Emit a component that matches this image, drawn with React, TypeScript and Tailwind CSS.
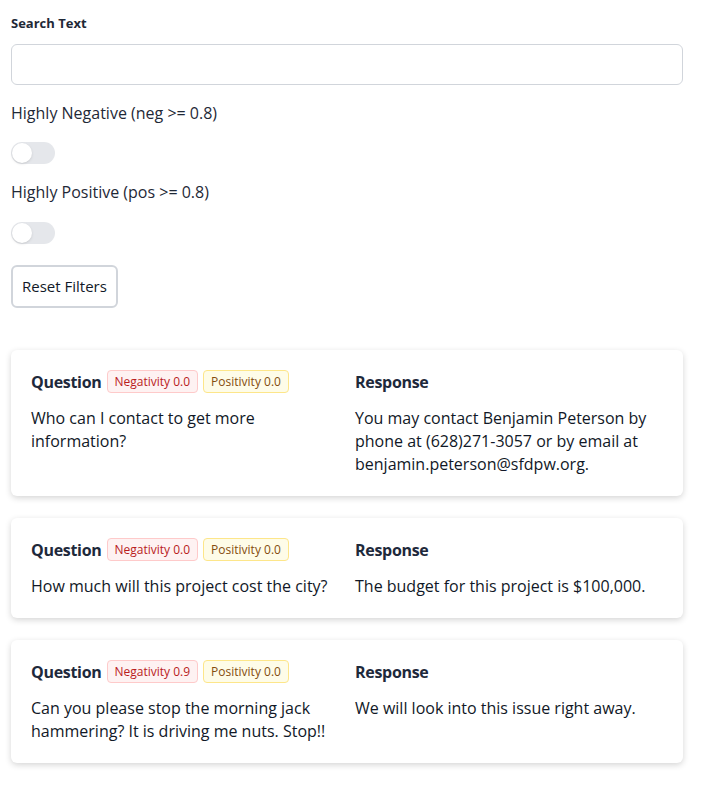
import React from "react"

type Item = {
  question: string
  response: string
  neg: string
  pos: string
}

const items: Item[] = [
  {
    question: "Who can I contact to get more information?",
    response:
      "You may contact Benjamin Peterson by phone at (628)271-3057 or by email at benjamin.peterson@sfdpw.org.",
    neg: "0.0",
    pos: "0.0",
  },
  {
    question: "How much will this project cost the city?",
    response: "The budget for this project is $100,000.",
    neg: "0.0",
    pos: "0.0",
  },
  {
    question: "Can you please stop the morning jack hammering? It is driving me nuts. Stop!!",
    response: "We will look into this issue right away.",
    neg: "0.9",
    pos: "0.0",
  },
]

function Toggle() {
  return (
    <button className="relative h-[22px] w-[44px] rounded-full bg-[#e5e7eb]">
      <span className="absolute left-[1px] top-[1px] h-[20px] w-[20px] rounded-full bg-white shadow-sm" />
    </button>
  )
}

function Card({ item }: { item: Item }) {
  return (
    <div className="rounded-md bg-white p-5 shadow-[0_2px_6px_rgba(0,0,0,0.17)]">
      <div className="grid grid-cols-2 gap-4">
        <div>
          <div className="flex h-6 items-center gap-[5px]">
            <h3 className="text-base font-bold tracking-[-0.3px] text-[#1e293b]">Question</h3>
            <span className="flex h-[23px] items-center rounded border border-[#fecaca] bg-[#fef2f2] px-[7px] text-xs text-[#b91c1c]">
              Negativity {item.neg}
            </span>
            <span className="flex h-[23px] items-center rounded border border-[#fde68a] bg-[#fefce8] px-[7px] text-xs text-[#854d0e]">
              Positivity {item.pos}
            </span>
          </div>
          <p className="mt-[13px] text-base leading-[23px] text-[#111827]">{item.question}</p>
        </div>
        <div>
          <div className="flex h-6 items-center">
            <h3 className="text-base font-bold tracking-[-0.3px] text-[#1e293b]">Response</h3>
          </div>
          <p className="mt-[13px] text-base leading-[23px] text-[#111827]">{item.response}</p>
        </div>
      </div>
    </div>
  )
}

export default function App() {
  return (
    <div
      className="min-h-screen bg-white px-[11px] pt-[14px] pb-8 text-[#1f2937]"
      style={{ fontFamily: "'Open Sans', 'Noto Sans', sans-serif" }}
    >
      <div className="w-[672px]">
        <label className="block text-[13px] font-bold text-[#1f2937]">Search Text</label>
        <input
          type="text"
          className="mt-[10px] block h-[41px] w-full rounded-md border border-[#d1d5db] px-3 outline-none"
        />
        <p className="mt-[16px] text-base text-[#1f2937]">Highly Negative (neg &gt;= 0.8)</p>
        <div className="mt-[17px] flex">
          <Toggle />
        </div>
        <p className="mt-[16px] text-base text-[#1f2937]">Highly Positive (pos &gt;= 0.8)</p>
        <div className="mt-[18px] flex">
          <Toggle />
        </div>
        <button className="mt-[21px] h-[43px] rounded-md border-2 border-[#d1d5db] bg-white px-[9px] text-[15px] text-[#111827]">
          Reset Filters
        </button>
        <div className="mt-[42px] flex flex-col gap-[22px]">
          {items.map((item, i) => (
            <Card key={i} item={item} />
          ))}
        </div>
      </div>
    </div>
  )
}
